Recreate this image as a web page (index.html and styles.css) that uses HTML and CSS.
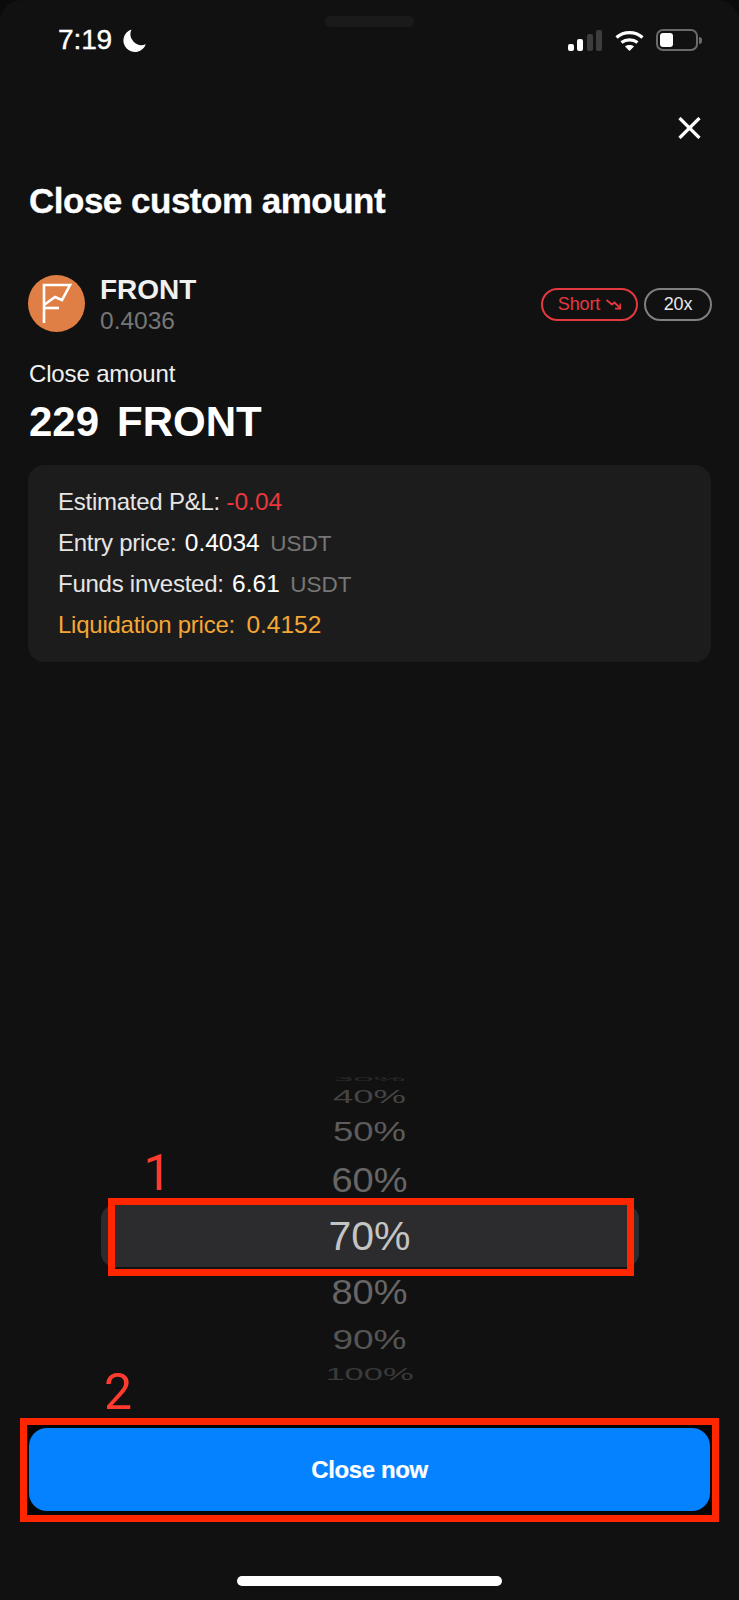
FILE: index.html
```html
<!DOCTYPE html>
<html lang="en">
<head>
    <meta charset="UTF-8">
    <meta name="viewport" content="width=device-width, initial-scale=1.0">
    <title>Close custom amount</title>
    <link rel="stylesheet" href="styles.css">
</head>
<body>
    <div class="screen">
        <div class="notch"></div>

        <div class="status-bar">
            <div class="status-time">
                <span>7:19</span>
                <svg class="moon" viewBox="0 0 23 23"><path d="M8.5 0.5A11.5 11.5 0 1 0 22.8 15.2A11 11 0 0 1 8.5 0.5Z" fill="#fff"/></svg>
            </div>
            <div class="status-icons">
                <div class="signal">
                    <i class="bar bar-1"></i>
                    <i class="bar bar-2"></i>
                    <i class="bar bar-3"></i>
                    <i class="bar bar-4"></i>
                </div>
                <svg class="wifi" viewBox="0 0 29 21" fill="none" stroke="#fff" stroke-width="3.4">
                    <path d="M1.5 7.5C9 1 20 1 27.5 7.5"/>
                    <path d="M6.5 12.5C11 9 18 9 22.5 12.5"/>
                    <path d="M14.5 21L10 16.5C12.5 14.6 16.5 14.6 19 16.5Z" fill="#fff" stroke="none"/>
                </svg>
                <div class="battery"><div class="battery-fill"></div></div>
                <div class="battery-nub"></div>
            </div>
        </div>

        <div class="close-row">
            <svg class="close-icon" viewBox="0 0 23 22" fill="none" stroke="#fff" stroke-width="3.2"><path d="M1.5 1L21.5 21M21.5 1L1.5 21"/></svg>
        </div>

        <h1 class="title">Close custom amount</h1>

        <div class="coin-row">
            <div class="coin-logo">
                <svg viewBox="0 0 57 57" fill="none" stroke="#fff" stroke-width="2.6"><path d="M16 48V10H42L34 25L27 22L16 30"/><path d="M16 33H31"/></svg>
            </div>
            <div class="coin-info">
                <div class="coin-name">FRONT</div>
                <div class="coin-price">0.4036</div>
            </div>
            <div class="badges">
                <div class="badge badge-short">
                    Short
                    <svg class="short-arrow" viewBox="0 0 15 11" fill="none" stroke="#e5393f" stroke-width="1.8"><path d="M0.5 1L6 5.5L8.5 3.5L14 9"/><path d="M9 9.6H14.4V4.5"/></svg>
                </div>
                <div class="badge badge-lev">20x</div>
            </div>
        </div>

        <div class="amount-label">Close amount</div>
        <div class="amount-value"><span>229</span><span>FRONT</span></div>

        <div class="details">
            <div class="detail-row">Estimated P&amp;L: <span class="red">-0.04</span></div>
            <div class="detail-row">Entry price: <span class="val">0.4034</span> <span class="unit">USDT</span></div>
            <div class="detail-row">Funds invested: <span class="val">6.61</span> <span class="unit">USDT</span></div>
            <div class="detail-row orange">Liquidation price: <span class="liq">0.4152</span></div>
        </div>

        <div class="picker">
            <div class="item item-30"><span>30%</span></div>
            <div class="item item-40"><span>40%</span></div>
            <div class="item item-50"><span>50%</span></div>
            <div class="item item-60"><span>60%</span></div>
            <div class="item item-70">
                <span>70%</span>
                <div class="mark-box"></div>
                <div class="mark-num mark-1">1</div>
            </div>
            <div class="item item-80"><span>80%</span></div>
            <div class="item item-90"><span>90%</span></div>
            <div class="item item-100"><span>100%</span></div>
        </div>

        <div class="close-wrap">
            <div class="mark-num mark-2">2</div>
            <button class="close-btn">Close now</button>
        </div>

        <div class="home-bar"></div>
    </div>
</body>
</html>
```

FILE: styles.css
```css
* {
    box-sizing: border-box;
}

html, body {
    margin: 0;
    background-color: #0b0b0b;
}

.screen {
    position: relative;
    width: 739px;
    height: 1600px;
    display: flex;
    flex-direction: column;
    overflow: hidden;
    border-radius: 22px 22px 0 0;
    background-color: #111111;
    font-family: "Liberation Sans", Arial, sans-serif;
    color: #fff;
}

.notch {
    position: absolute;
    top: 16px;
    left: 325px;
    width: 89px;
    height: 11px;
    border-radius: 6px;
    background-color: #1a1a1a;
}

/* status bar */
.status-bar {
    display: flex;
    justify-content: space-between;
    align-items: center;
    height: 24px;
    margin-top: 28px;
    padding: 0 37px 0 58px;
}

.status-time {
    display: flex;
    align-items: center;
    gap: 11px;
    font-size: 28px;
    letter-spacing: -0.1px;
    -webkit-text-stroke: 0.4px #fff;
}

.moon {
    width: 23px;
    height: 23px;
}

.status-icons {
    display: flex;
    align-items: center;
}

.signal {
    display: flex;
    align-items: flex-end;
    gap: 3.5px;
    height: 22px;
    margin-right: 13px;
}

.bar {
    width: 6px;
    border-radius: 2px;
    background-color: #fff;
}

.bar-1 { height: 7px; }
.bar-2 { height: 12px; }
.bar-3 { height: 17px; background-color: #3d3d3d; }
.bar-4 { height: 21px; background-color: #3d3d3d; }

.wifi {
    width: 29px;
    height: 21px;
    margin-right: 12px;
}

.battery {
    width: 42px;
    height: 22px;
    padding: 2px;
    border: 2px solid #6b6b6b;
    border-radius: 7px;
}

.battery-fill {
    width: 13px;
    height: 100%;
    border-radius: 3px;
    background-color: #fff;
}

.battery-nub {
    width: 3px;
    height: 7px;
    margin-left: 1px;
    border-radius: 0 3px 3px 0;
    background-color: #6b6b6b;
}

.close-row {
    display: flex;
    justify-content: flex-end;
    margin-top: 65px;
    padding-right: 38px;
}

.close-icon {
    width: 23px;
    height: 22px;
}

.title {
    margin: 43px 0 0 29px;
    font-size: 35px;
    line-height: 38px;
    font-weight: 700;
    letter-spacing: -0.5px;
    -webkit-text-stroke: 0.3px #fff;
}

/* coin row */
.coin-row {
    display: flex;
    align-items: flex-start;
    height: 57px;
    margin-top: 55px;
    padding: 0 27px 0 28px;
}

.coin-logo {
    width: 57px;
    height: 57px;
    border-radius: 50%;
    background-color: #e07f45;
}

.coin-logo svg {
    display: block;
}

.coin-info {
    flex: 1;
    margin: -1px 0 0 15px;
}

.coin-name {
    font-size: 28px;
    line-height: 32px;
    font-weight: 700;
    color: #f0f0f0;
}

.coin-price {
    font-size: 24.5px;
    line-height: 30px;
    color: #767676;
}

.badges {
    display: flex;
    gap: 6px;
    margin-top: 13px;
}

.badge {
    display: flex;
    align-items: center;
    justify-content: center;
    height: 33px;
    border: 2px solid #808080;
    border-radius: 17px;
    font-size: 18px;
    letter-spacing: -0.1px;
    color: #e8e8e8;
}

.badge-short {
    width: 97px;
    gap: 6px;
    border-color: #e5393f;
    color: #e5393f;
}

.badge-lev {
    width: 68px;
}

.short-arrow {
    width: 15px;
    height: 11px;
}

.amount-label {
    margin: 25px 0 0 29px;
    font-size: 24px;
    line-height: 34px;
    letter-spacing: -0.15px;
    color: #f0f0f0;
}

.amount-value {
    display: flex;
    gap: 18px;
    margin: 7px 0 0 29px;
    font-size: 42px;
    line-height: 48px;
    font-weight: 700;
}

/* details panel */
.details {
    display: flex;
    flex-direction: column;
    height: 197px;
    margin: 19px 28px 0;
    padding: 16px 30px;
    border-radius: 16px;
    background-color: #1c1c1c;
}

.detail-row {
    height: 41px;
    font-size: 24px;
    line-height: 41px;
    letter-spacing: -0.25px;
    color: #e6e6e6;
}

.detail-row span {
    margin-left: 2px;
    font-size: 24.5px;
    line-height: 1;
    letter-spacing: 0;
}

.detail-row .unit {
    margin-left: 4px;
    font-size: 22.5px;
    color: #767676;
}

.detail-row .red {
    margin-left: 0;
    color: #e8383d;
}

.detail-row .liq {
    margin-left: 5px;
}

.val {
    color: #fff;
}

.orange {
    color: #f5a733;
}

/* percent wheel */
.picker {
    display: flex;
    flex-direction: column;
    align-items: center;
    margin-top: 411px;
}

.item {
    position: relative;
    display: flex;
    align-items: center;
    justify-content: center;
    width: 538px;
    line-height: 1;
}

.item span {
    display: block;
}

.item-30 { height: 12px; font-size: 36px; color: #2a2a2a; overflow: hidden; }
.item-30 span { transform: scaleY(0.17); }
.item-40 { height: 24px; font-size: 36.5px; color: #444; }
.item-40 span { transform: scaleY(0.5); }
.item-50 { height: 46px; font-size: 36.5px; color: #5c5c5c; }
.item-50 span { transform: scaleY(0.76); }
.item-60 { height: 50px; font-size: 38px; color: #666; }
.item-60 span { transform: scaleY(0.92); }
.item-70 {
    height: 62px;
    border-radius: 14px;
    font-size: 41px;
    color: #c4c4c4;
    background-color: #2c2c2e;
}
.item-80 { height: 50px; font-size: 38px; color: #666; }
.item-80 span { transform: scaleY(0.92); }
.item-90 { height: 44px; font-size: 37px; color: #555; }
.item-90 span { transform: scaleY(0.75); }
.item-100 { height: 26px; font-size: 34.5px; color: #3a3a3a; }
.item-100 span { transform: scaleY(0.5); }

/* red annotations drawn on top of the screenshot */
.mark-box {
    position: absolute;
    top: -7px;
    left: 7px;
    width: 526px;
    height: 78px;
    border: 7px solid #ff2600;
}

.mark-num {
    position: absolute;
    font-family: Roboto, "Liberation Sans", sans-serif;
    font-size: 50px;
    line-height: 1;
    color: #ff3b30;
}

.mark-1 {
    top: -57px;
    left: 43px;
}

.mark-2 {
    top: -58px;
    left: 77px;
}

.close-wrap {
    position: relative;
    height: 104px;
    margin: 31px 20px 0;
    padding: 3px 2px;
    border: 7px solid #ff2600;
    background-color: #060606;
}

.close-btn {
    display: block;
    width: 100%;
    height: 83px;
    border: none;
    border-radius: 18px;
    background-color: #0582ff;
    font-family: inherit;
    font-size: 24px;
    font-weight: 700;
    letter-spacing: -0.4px;
    -webkit-text-stroke: 0.2px #fff;
    color: #fff;
}

.home-bar {
    width: 265px;
    height: 10px;
    margin: 54px auto 0;
    border-radius: 5px;
    background-color: #fff;
}
```
